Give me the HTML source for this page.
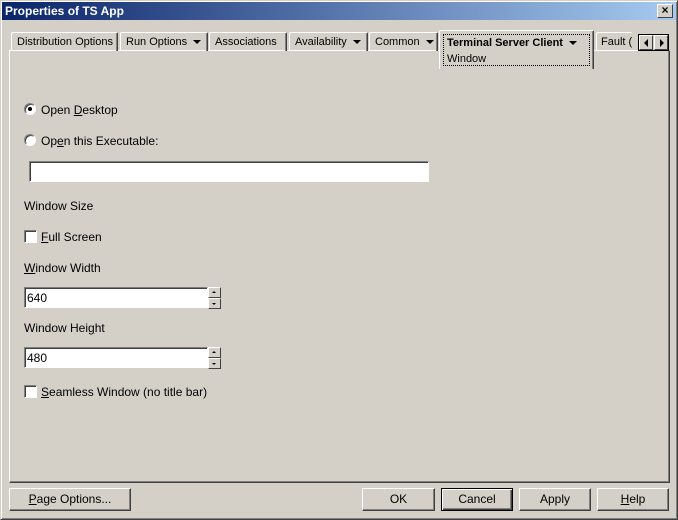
<!DOCTYPE html>
<html><head><style>
*{box-sizing:border-box;margin:0;padding:0}
body{width:678px;height:520px;background:#d4d0c8;font-family:"Liberation Sans",Arial,sans-serif;font-size:12px;color:#000;position:relative;overflow:hidden}
.win{position:absolute;left:0;top:0;width:678px;height:520px;border:1px solid;border-color:#d4d0c8 #404040 #404040 #d4d0c8;box-shadow:inset 1px 1px #fff,inset -1px -1px #808080}
.title{position:absolute;left:2px;top:2px;width:674px;height:18px;background:linear-gradient(to right,#0a246a,#a6caf0);color:#fff;font-weight:bold;font-size:12px;line-height:18px;padding-left:3px}
.close{position:absolute;right:5px;top:4px;width:16px;height:14px;background:#d4d0c8;border:1px solid;border-color:#fff #404040 #404040 #fff;font-size:12px;line-height:11px;text-align:center;color:#000;font-weight:bold}
.a{position:absolute}
.panel{position:absolute;left:9px;top:50px;width:661px;height:433px;border:1px solid;border-color:#fff #404040 #404040 #fff;box-shadow:inset -1px -1px #808080}
.tab{position:absolute;top:32px;height:19px;border:1px solid;border-bottom:none;border-color:#fff #404040 #404040 #fff;border-radius:2px 2px 0 0;line-height:19px;padding-left:5px;white-space:nowrap;box-shadow:inset -1px 0 #808080;overflow:hidden;font-size:11px}
.arr{display:inline-block;width:0;height:0;border-left:4px solid transparent;border-right:4px solid transparent;border-top:4px solid #000;margin-left:6px;vertical-align:1px}
.btn{position:absolute;top:488px;height:23px;border:1px solid;border-color:#fff #404040 #404040 #fff;box-shadow:inset -1px -1px #808080;text-align:center;line-height:21px}
.inp{position:absolute;background:#fff;border:1px solid;border-color:#808080 #fff #fff #808080;box-shadow:inset 1px 1px #404040;padding-left:2px;line-height:20px;font-size:12px}
.radio{position:absolute;width:12px;height:12px;border-radius:50%;background:#fff;border:1px solid;border-color:#808080 #fff #fff #808080;box-shadow:inset 1px 1px #404040}
.chk{position:absolute;width:13px;height:13px;background:#fff;border:1px solid;border-color:#808080 #fff #fff #808080;box-shadow:inset 1px 1px #404040}
.spin{position:absolute;left:208px;width:13px;height:11px;border:1px solid;border-color:#fff #404040 #404040 #fff;background:#d4d0c8}
.spin i{position:absolute;left:3px;top:3px;width:0;height:0;border-left:2px solid transparent;border-right:2px solid transparent}
</style></head><body>
<div class="win"></div>
<div class="title">Properties of TS App</div>
<div class="close">×</div>
<div class="panel"></div>
<div class="tab" style="left:11px;width:107px">Distribution Options</div>
<div class="tab" style="left:120px;width:88px">Run Options<span class="arr"></span></div>
<div class="tab" style="left:209px;width:78px">Associations</div>
<div class="tab" style="left:289px;width:79px">Availability<span class="arr"></span></div>
<div class="tab" style="left:369px;width:69px">Common<span class="arr"></span></div>
<div class="tab" style="left:439px;top:30px;width:155px;height:39px;background:#d4d0c8;line-height:16px;padding:3px 3px">
<div style="border:1px dotted #000;height:32px;padding-left:3px"><b>Terminal Server Client</b><span class="arr"></span><br>Window</div></div>
<div class="tab" style="left:596px;width:36px;border-right:none;box-shadow:none;padding-left:4px">Fault (</div>
<div class="a" style="left:638px;top:34px;width:31px;height:17px;border:1px solid #000;background:#d4d0c8">
<div style="position:absolute;left:0;top:0;width:14px;height:15px;border:1px solid;border-color:#fff #404040 #404040 #fff"><i style="position:absolute;left:4px;top:3px;border-top:4px solid transparent;border-bottom:4px solid transparent;border-right:4px solid #000"></i></div>
<div style="position:absolute;left:15px;top:0;width:14px;height:15px;border:1px solid;border-color:#fff #404040 #404040 #fff"><i style="position:absolute;left:5px;top:3px;border-top:4px solid transparent;border-bottom:4px solid transparent;border-left:4px solid #000"></i></div>
</div>

<div class="radio" style="left:24px;top:103px"><div style="position:absolute;left:3px;top:3px;width:4px;height:4px;background:#000;border-radius:50%"></div></div>
<div class="a" style="left:41px;top:103px">Open <u>D</u>esktop</div>
<div class="radio" style="left:24px;top:134px"></div>
<div class="a" style="left:41px;top:134px">Op<u>e</u>n this Executable:</div>
<div class="inp" style="left:29px;top:161px;width:400px;height:21px"></div>
<div class="a" style="left:24px;top:199px">Window Size</div>
<div class="chk" style="left:24px;top:230px"></div>
<div class="a" style="left:41px;top:230px"><u>F</u>ull Screen</div>
<div class="a" style="left:24px;top:261px"><u>W</u>indow Width</div>
<div class="inp" style="left:24px;top:287px;width:184px;height:21px">640</div>
<div class="spin" style="top:287px"><i style="border-bottom:2px solid #000"></i></div>
<div class="spin" style="top:298px"><i style="border-top:2px solid #000;top:4px"></i></div>
<div class="a" style="left:24px;top:321px">Window Hei<u>g</u>ht</div>
<div class="inp" style="left:24px;top:347px;width:184px;height:21px">480</div>
<div class="spin" style="top:347px"><i style="border-bottom:2px solid #000"></i></div>
<div class="spin" style="top:358px"><i style="border-top:2px solid #000;top:4px"></i></div>
<div class="chk" style="left:24px;top:385px"></div>
<div class="a" style="left:41px;top:385px"><u>S</u>eamless Window (no title bar)</div>

<div class="btn" style="left:9px;width:122px"><u>P</u>age Options...</div>
<div class="btn" style="left:362px;width:73px">OK</div>
<div class="btn" style="left:441px;width:72px;border:1px solid #000;box-shadow:inset 1px 1px #fff,inset -1px -1px #404040,inset -2px -2px #808080">Cancel</div>
<div class="btn" style="left:519px;width:72px">Apply</div>
<div class="btn" style="left:597px;width:72px"><u>H</u>elp</div>
</body></html>
